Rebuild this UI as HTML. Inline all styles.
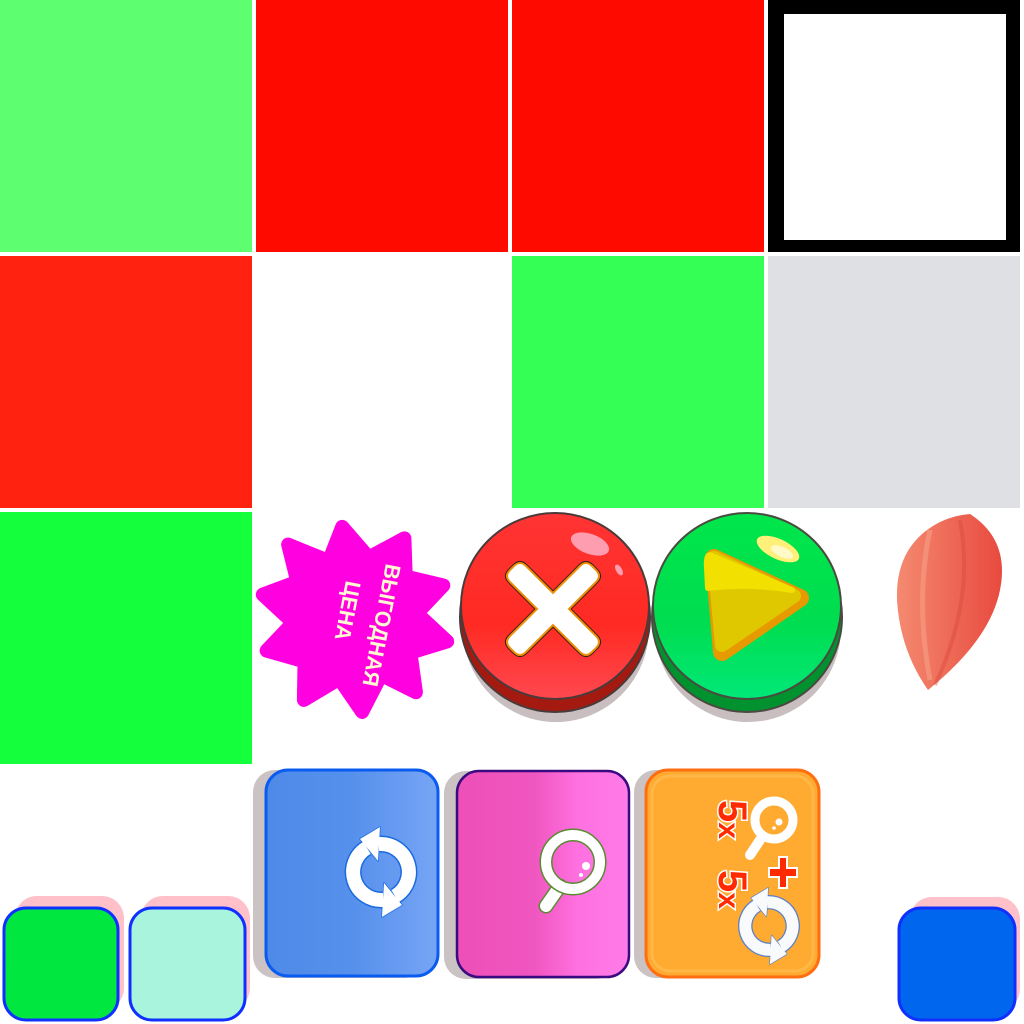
<!DOCTYPE html>
<html><head><meta charset="utf-8"><style>
html,body{margin:0;padding:0;background:#fff;width:1024px;height:1024px;overflow:hidden}
.a{position:absolute}
</style></head><body>
<div class="a" style="left:0;top:0;width:252px;height:252px;background:#5dff70"></div>
<div class="a" style="left:256px;top:0;width:252px;height:252px;background:#ff0a00"></div>
<div class="a" style="left:512px;top:0;width:252px;height:252px;background:#ff0a00"></div>
<div class="a" style="left:768px;top:0;width:222px;height:226px;border-style:solid;border-color:#000;border-width:14px 14px 12px 16px;background:#fff"></div>
<div class="a" style="left:0;top:256px;width:252px;height:252px;background:#ff2210"></div>
<div class="a" style="left:512px;top:256px;width:252px;height:252px;background:#33ff55"></div>
<div class="a" style="left:768px;top:256px;width:252px;height:252px;background:#dfe0e3"></div>
<div class="a" style="left:0;top:512px;width:252px;height:252px;background:#14ff3c"></div>

<svg class="a" style="left:0;top:0" width="1024" height="1024" viewBox="0 0 1024 1024">
<defs>
<linearGradient id="bl" x1="0" x2="1"><stop offset="0" stop-color="#4f8ae8"/><stop offset="0.5" stop-color="#5590ec"/><stop offset="1" stop-color="#77a5f5"/></linearGradient>
<linearGradient id="pk" x1="0" x2="1"><stop offset="0" stop-color="#ee4fb8"/><stop offset="0.45" stop-color="#f056c0"/><stop offset="0.7" stop-color="#ff70e0"/><stop offset="1" stop-color="#ff7ce8"/></linearGradient>
<linearGradient id="rd" x1="0" y1="0" x2="0" y2="1"><stop offset="0" stop-color="#ff3434"/><stop offset="0.6" stop-color="#ff2a22"/><stop offset="1" stop-color="#ff4850"/></linearGradient>
<linearGradient id="gr" x1="0" y1="0" x2="0" y2="1"><stop offset="0" stop-color="#00e64a"/><stop offset="0.6" stop-color="#00dd50"/><stop offset="1" stop-color="#00e878"/></linearGradient>
<linearGradient id="pt" x1="0" x2="1"><stop offset="0" stop-color="#f48a70"/><stop offset="1" stop-color="#e84a3e"/></linearGradient>
<g id="half">
<path d="M14,24.2 A28,28 0 0 0 -2.4,-27.9" fill="none" stroke-width="17"/>
<path d="M-1,-45 L-3,-11 L-21,-33 Z" stroke-width="1.5" stroke-linejoin="round"/>
</g>
<g id="ref"><use href="#half"/><use href="#half" transform="rotate(180)"/></g>
<g id="refw"><path d="M14,24.2 A28,28 0 0 0 -2.4,-27.9" fill="none" stroke="#fff" stroke-width="14"/>
<path d="M-1,-45 L-3,-11 L-21,-33 Z" fill="#fff"/></g>
</defs>

<!-- star -->
<g transform="translate(355,618) rotate(-8)">
<polygon fill="#ff00e1" stroke="#ff00e1" stroke-width="14" stroke-linejoin="round" points="0,-92 22,-58 60,-72 56,-34 92,-20 62,4 88,36 50,42 50,82 18,60 -6,94 -24,58 -62,74 -56,36 -92,20 -62,-4 -88,-36 -52,-44 -56,-82 -18,-60"/>
</g>
<g font-family="Liberation Sans, sans-serif" font-weight="bold" font-size="22" fill="#fff8d0">
<text transform="translate(386,563) rotate(101)" textLength="124" lengthAdjust="spacingAndGlyphs">ВЫГОДНАЯ</text>
<text transform="translate(346,580) rotate(101)" textLength="60" lengthAdjust="spacingAndGlyphs">ЦЕНА</text>
</g>

<!-- red button -->
<ellipse cx="556" cy="628" rx="93" ry="94" fill="#c8bec0"/>
<ellipse cx="555" cy="617" rx="95" ry="95" fill="#a51a10" stroke="#4a3a3a" stroke-width="2"/>
<ellipse cx="555" cy="606" rx="94" ry="93" fill="url(#rd)" stroke="#4a3a3a" stroke-width="2"/>
<ellipse cx="590" cy="544" rx="20" ry="10" transform="rotate(20 590 544)" fill="#ff9db0"/>
<ellipse cx="619" cy="570" rx="3" ry="6" transform="rotate(-30 619 570)" fill="#ff9db0"/>
<path d="M526,566 L553,593 L580,566 Q586,560 592,566 L596,570 Q602,576 596,582 L569,609 L596,636 Q602,642 596,648 L592,652 Q586,658 580,652 L553,625 L526,652 Q520,658 514,652 L510,648 Q504,642 510,636 L537,609 L510,582 Q504,576 510,570 L514,566 Q520,560 526,566Z" fill="#fff" stroke="#3a2010" stroke-width="4"/>
<path d="M526,566 L553,593 L580,566 Q586,560 592,566 L596,570 Q602,576 596,582 L569,609 L596,636 Q602,642 596,648 L592,652 Q586,658 580,652 L553,625 L526,652 Q520,658 514,652 L510,648 Q504,642 510,636 L537,609 L510,582 Q504,576 510,570 L514,566 Q520,560 526,566Z" fill="#fff" stroke="#f0900a" stroke-width="2"/>

<!-- green button -->
<ellipse cx="748" cy="628" rx="93" ry="94" fill="#c8bec0"/>
<ellipse cx="747" cy="617" rx="95" ry="95" fill="#00922e" stroke="#4a4a40" stroke-width="2"/>
<ellipse cx="747" cy="606" rx="94" ry="93" fill="url(#gr)" stroke="#4a4a40" stroke-width="2"/>
<ellipse cx="778" cy="549" rx="23" ry="10" transform="rotate(25 778 549)" fill="#fff07a"/>
<ellipse cx="782" cy="552" rx="12" ry="5" transform="rotate(25 782 552)" fill="#fffac8"/>
<path d="M714,558 L800,598 L722,652 Z" fill="#e69a00" stroke="#e69a00" stroke-width="18" stroke-linejoin="round"/>
<path d="M714,558 L794,596 L722,645 Z" fill="#e0c800" stroke="#e0c800" stroke-width="14" stroke-linejoin="round"/>
<path d="M712,556 Q706,552 707,568 L708,588 Q750,583 792,590 Z" fill="#f2e000" stroke="#f2e000" stroke-width="6" stroke-linejoin="round"/>

<!-- petal -->
<path d="M970,514 Q1010,540 1000,590 Q990,640 928,690 Q900,650 897,600 Q895,545 940,522 Q955,515 970,514Z" fill="url(#pt)"/>
<path d="M930,530 Q915,600 930,680" stroke="#f6a085" stroke-width="5" fill="none" opacity="0.6"/>
<path d="M960,520 Q975,600 935,685" stroke="#d8463a" stroke-width="4" fill="none" opacity="0.4"/>

<!-- cards -->
<rect x="253" y="770" width="174" height="208" rx="22" fill="#cbc3c3"/>
<rect x="266" y="770" width="172" height="206" rx="22" fill="url(#bl)" stroke="#0a5cf0" stroke-width="3"/>
<rect x="444" y="771" width="174" height="208" rx="22" fill="#cbc3c3"/>
<rect x="457" y="771" width="172" height="206" rx="22" fill="url(#pk)" stroke="#3a0a80" stroke-width="2.5"/>
<rect x="634" y="770" width="174" height="208" rx="22" fill="#cbc3c3"/>
<rect x="646" y="770" width="173" height="207" rx="22" fill="#ffaa30" stroke="#ff6e10" stroke-width="3"/>
<rect x="652" y="776" width="161" height="195" rx="18" fill="none" stroke="#ffb848" stroke-width="3"/>

<!-- refresh icon blue -->
<g transform="translate(381,872)">
<g stroke="#1a6ae0" fill="#1a6ae0"><use href="#ref"/></g>
<use href="#refw"/><use href="#refw" transform="rotate(180)"/>
</g>

<!-- magnifier pink -->
<g>
<line x1="546" y1="906" x2="560" y2="886" stroke="#5a8a30" stroke-width="15" stroke-linecap="round"/>
<line x1="546" y1="906" x2="560" y2="886" stroke="#fff" stroke-width="12" stroke-linecap="round"/>
<circle cx="573" cy="862" r="27" fill="none" stroke="#5a8a30" stroke-width="13"/>
<circle cx="573" cy="862" r="27" fill="none" stroke="#fff" stroke-width="10"/>
<circle cx="586" cy="866" r="4" fill="#fff"/><circle cx="581" cy="875" r="2" fill="#fff"/>
</g>

<!-- orange card icons -->
<g>
<line x1="750" y1="855" x2="760" y2="840" stroke="#fff" stroke-width="10" stroke-linecap="round"/>
<circle cx="774" cy="820" r="19" fill="none" stroke="#fff" stroke-width="9"/>
<circle cx="779" cy="822" r="3.5" fill="#fff"/><circle cx="774" cy="828" r="1.8" fill="#fff"/>
<path d="M769,868 h10 v-11 h8 v11 h10 v9 h-10 v11 h-8 v-11 h-10z" fill="#ff2a00" stroke="#fff" stroke-width="2"/>
<g font-family="Liberation Sans, sans-serif" font-weight="bold" fill="#ff2a00" stroke="#fff" stroke-width="3" paint-order="stroke">
<text transform="translate(719,800) rotate(90)" font-size="40">5<tspan font-size="30">x</tspan></text>
<text transform="translate(719,870) rotate(90)" font-size="40">5<tspan font-size="30">x</tspan></text>
</g>
<g transform="translate(769,926) scale(0.85)">
<g stroke="#5a80c8" fill="#5a80c8"><use href="#ref"/></g>
<g opacity="0.96"><use href="#refw"/><use href="#refw" transform="rotate(180)"/></g>
</g>
</g>

<!-- small squares -->
<rect x="15" y="896" width="109" height="114" rx="22" fill="#ffc0ca"/>
<rect x="4" y="908" width="114" height="112" rx="22" fill="#00e840" stroke="#1030ff" stroke-width="3"/>
<rect x="141" y="896" width="109" height="114" rx="22" fill="#ffc0ca"/>
<rect x="130" y="908" width="115" height="112" rx="22" fill="#a8f4dc" stroke="#1030ff" stroke-width="3"/>
<rect x="910" y="897" width="110" height="114" rx="22" fill="#ffc0ca"/>
<rect x="899" y="908" width="116" height="112" rx="22" fill="#0066ee" stroke="#1030ff" stroke-width="3"/>
</svg>
</body></html>
